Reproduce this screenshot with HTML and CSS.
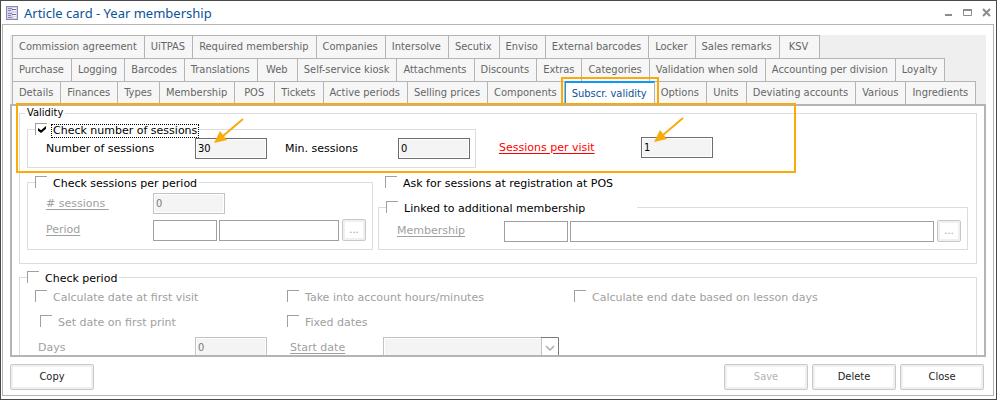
FILE: index.html
```html
<!DOCTYPE html>
<html lang="en">
<head>
  <meta charset="UTF-8">
  <meta name="viewport" content="width=device-width, initial-scale=1.0">
  <title>Article card - Year membership</title>
  <link rel="stylesheet" href="styles.css">
</head>
<body>

<div class="window">
  <header class="titlebar">
    <svg class="app-icon" width="12" height="14" viewBox="0 0 12 14" shape-rendering="crispEdges">
      <rect x="0.5" y="0.5" width="11" height="13" fill="#d4d4ec" stroke="#8c87b0"/>
      <path d="M2 2.5h4M2 4.5h3M2 7.5h4M2 9.5h3M2 11.5h4" stroke="#8c87b0"/>
      <path d="M7 2.5h3M7 4.5h3M7 7.5h3M7 9.5h3M8 11.5h2" stroke="#fff"/>
      <path d="M6 3.5h4M6 8.5h4" stroke="#6d6899"/>
    </svg>
    <h1 class="title">Article card - Year membership</h1>
    <div class="window-buttons">
      <button class="win-btn" aria-label="Minimize"><svg width="9" height="9" viewBox="0 0 9 9"><path d="M1 7h7" stroke="#8c8c8c" stroke-width="2"/></svg></button>
      <button class="win-btn" aria-label="Maximize"><svg width="9" height="9" viewBox="0 0 9 9"><path d="M.5 1v6.500h8v-6.500" fill="none" stroke="#8c8c8c"/><path d="M0 2h9" stroke="#8c8c8c" stroke-width="2"/></svg></button>
      <button class="win-btn" aria-label="Close window"><svg width="9" height="9" viewBox="0 0 9 9"><path d="M1 1l7 7M8 1l-7 7" stroke="#8c8c8c" stroke-width="2"/></svg></button>
    </div>
  </header>

  <main class="frame">
    <div class="tabs" role="tablist">
      <div class="tab-row">
        <button class="tab" role="tab">Commission agreement</button>
        <button class="tab" role="tab">UiTPAS</button>
        <button class="tab" role="tab">Required membership</button>
        <button class="tab" role="tab">Companies</button>
        <button class="tab" role="tab">Intersolve</button>
        <button class="tab" role="tab">Secutix</button>
        <button class="tab" role="tab">Enviso</button>
        <button class="tab" role="tab">External barcodes</button>
        <button class="tab" role="tab">Locker</button>
        <button class="tab" role="tab">Sales remarks</button>
        <button class="tab" role="tab">KSV</button>
      </div>
      <div class="tab-row">
        <button class="tab" role="tab">Purchase</button>
        <button class="tab" role="tab">Logging</button>
        <button class="tab" role="tab">Barcodes</button>
        <button class="tab" role="tab">Translations</button>
        <button class="tab" role="tab">Web</button>
        <button class="tab" role="tab">Self-service kiosk</button>
        <button class="tab" role="tab">Attachments</button>
        <button class="tab" role="tab">Discounts</button>
        <button class="tab" role="tab">Extras</button>
        <button class="tab" role="tab">Categories</button>
        <button class="tab" role="tab">Validation when sold</button>
        <button class="tab" role="tab">Accounting per division</button>
        <button class="tab" role="tab">Loyalty</button>
      </div>
      <div class="tab-row">
        <button class="tab" role="tab">Details</button>
        <button class="tab" role="tab">Finances</button>
        <button class="tab" role="tab">Types</button>
        <button class="tab" role="tab">Membership</button>
        <button class="tab" role="tab">POS</button>
        <button class="tab" role="tab">Tickets</button>
        <button class="tab" role="tab">Active periods</button>
        <button class="tab" role="tab">Selling prices</button>
        <button class="tab" role="tab">Components</button>
        <button class="tab active" role="tab" aria-selected="true">Subscr. validity</button>
        <button class="tab" role="tab">Options</button>
        <button class="tab" role="tab">Units</button>
        <button class="tab" role="tab">Deviating accounts</button>
        <button class="tab" role="tab">Various</button>
        <button class="tab" role="tab">Ingredients</button>
      </div>
    </div>

    <div class="panel">
      <div class="panel-content">
        <fieldset class="group validity">
          <legend class="legend-text">Validity</legend>

          <div class="row top-row">
            <fieldset class="group sub session-group">
              <legend class="check-legend">
                <input type="checkbox" class="check" id="checkSessions" checked>
                <label class="focused" for="checkSessions">Check number of sessions</label>
              </legend>
              <div class="row">
                <label class="label-wide" for="numSessions">Number of sessions</label>
                <div class="field">
                  <input type="text" class="input active-input" id="numSessions" value="30">
                  <svg class="arrow" width="30" height="26" viewBox="0 0 30 26"><path d="M29 1L9 18" stroke="#f9ab0a" stroke-width="2"/><path d="M0 25L6 13L13 22Z" fill="#f9ab0a"/></svg>
                </div>
                <label class="label-min" for="minSessions">Min. sessions</label>
                <input type="text" class="input active-input" id="minSessions" value="0">
              </div>
            </fieldset>
            <div class="row visit">
              <a href="#" class="link required" id="visitLabel">Sessions per visit</a>
              <div class="field">
                <input type="text" class="input active-input" aria-labelledby="visitLabel" value="1">
                <svg class="arrow visit-arrow" width="30" height="26" viewBox="0 0 30 26"><path d="M29 1L9 18" stroke="#f9ab0a" stroke-width="2"/><path d="M0 25L6 13L13 22Z" fill="#f9ab0a"/></svg>
              </div>
            </div>
          </div>

          <div class="row bottom-row">
            <fieldset class="group sub period-group">
              <legend class="check-legend">
                <input type="checkbox" class="check" id="checkPerPeriod">
                <label for="checkPerPeriod">Check sessions per period</label>
              </legend>
              <div class="row">
                <a href="#" class="link label-narrow" id="sessionsLabel"># sessions&nbsp;</a>
                <input type="text" class="input" aria-labelledby="sessionsLabel" value="0" disabled>
              </div>
              <div class="row lookup">
                <a href="#" class="link label-narrow" id="periodLabel">Period</a>
                <input type="text" class="input code" aria-labelledby="periodLabel">
                <input type="text" class="input name" aria-labelledby="periodLabel">
                <button class="btn more" aria-label="Select period">...</button>
              </div>
            </fieldset>

            <div class="linked">
              <div class="check-row ask">
                <input type="checkbox" class="check" id="askSessions">
                <label for="askSessions">Ask for sessions at registration at POS</label>
              </div>
              <fieldset class="group sub member-group">
                <legend class="check-legend wide">
                  <input type="checkbox" class="check" id="linkedMembership">
                  <label for="linkedMembership">Linked to additional membership</label>
                </legend>
                <div class="row lookup">
                  <a href="#" class="link label-narrow" id="memberLabel">Membership</a>
                  <input type="text" class="input code" aria-labelledby="memberLabel">
                  <input type="text" class="input name" aria-labelledby="memberLabel">
                  <button class="btn more" aria-label="Select membership">...</button>
                </div>
              </fieldset>
            </div>
          </div>
        </fieldset>

        <fieldset class="group check-period">
          <legend class="check-legend">
            <input type="checkbox" class="check" id="checkPeriod">
            <label for="checkPeriod">Check period</label>
          </legend>
          <div class="options">
            <div class="check-row">
              <input type="checkbox" class="check" id="firstVisit" disabled>
              <label for="firstVisit">Calculate date at first visit</label>
            </div>
            <div class="check-row">
              <input type="checkbox" class="check" id="hoursMinutes" disabled>
              <label for="hoursMinutes">Take into account hours/minutes</label>
            </div>
            <div class="check-row">
              <input type="checkbox" class="check" id="lessonDays" disabled>
              <label for="lessonDays">Calculate end date based on lesson days</label>
            </div>
            <div class="check-row indent">
              <input type="checkbox" class="check" id="firstPrint" disabled>
              <label for="firstPrint">Set date on first print</label>
            </div>
            <div class="check-row">
              <input type="checkbox" class="check" id="fixedDates" disabled>
              <label for="fixedDates">Fixed dates</label>
            </div>
          </div>
          <div class="row dates">
            <label class="days" for="days">Days</label>
            <input type="text" class="input" id="days" value="0" disabled>
            <a href="#" class="link start" id="startLabel">Start date</a>
            <div class="select-box">
              <select class="select" aria-labelledby="startLabel" disabled><option></option></select>
              <svg class="chevron" width="18" height="21" viewBox="0 0 18 21"><path d="M.5 0V21" stroke="#c3c3c3"/><path d="M0 .5H17.500V21" fill="none" stroke="#7a7a7a"/><path d="M5 9l4 4l4-4" fill="none" stroke="#aaa" stroke-width="1.500"/></svg>
            </div>
          </div>
        </fieldset>
      </div>
      <div class="highlight"></div>
    </div>

    <div class="actions">
      <button class="btn action">Copy</button>
      <div class="spacer"></div>
      <button class="btn action" disabled>Save</button>
      <button class="btn action">Delete</button>
      <button class="btn action">Close</button>
    </div>
  </main>
</div>

</body>
</html>
```
FILE: styles.css
```css
* {
  box-sizing: border-box;
}

body {
  margin: 0;
  background-color: #fff;
  color: #000;
  font-family: "DejaVu Sans", Verdana, sans-serif;
  font-size: 11px;
  line-height: 14px;
}

button, input, select {
  font: inherit;
  margin: 0;
}

.window {
  display: flex;
  flex-direction: column;
  height: 100vh;
  border: 1px solid #4a4a4a;
  padding: 0 2px 3px 1px;
}

/* Title bar */
.titlebar {
  display: flex;
  align-items: center;
  height: 23px;
  padding: 0 3px 0 4px;
}

.title {
  flex: 1;
  margin: 0 0 0 6px;
  color: #0a5299;
  font-family: "Noto Sans", Tahoma, sans-serif;
  font-size: 13px;
  font-weight: normal;
  line-height: 20px;
}

.window-buttons {
  display: flex;
  gap: 10px;
}

.win-btn {
  display: flex;
  border: none;
  padding: 0;
  background: none;
}

.frame {
  flex: 1;
  display: flex;
  flex-direction: column;
  min-height: 0;
  border: 1px solid #b4b4b4;
  padding: 10px 7px 5px;
}

/* Tabs */
.tabs {
  padding-left: 2px;
  background-color: #efefef;
}

.tab-row {
  display: flex;
}

.tab {
  position: relative;
  min-width: 40px;
  height: 23px;
  border: 1px solid #b4b4b4;
  border-width: 1px 1px 0 0;
  padding: 0 7px 0 6px;
  background-color: #f6f6f6;
  color: #666;
  font-family: "DejaVu Sans Condensed", Tahoma, sans-serif;
  white-space: nowrap;
}

.tab:first-child {
  border-left-width: 1px;
}

.tab.active {
  border-left: 1px solid #0a9bf5;
  border-top: 2px solid #0a9bf5;
  background-color: #fff;
  color: #0a5299;
}

/* orange frame round the selected tab */
.tab.active::after {
  content: "";
  position: absolute;
  z-index: 1;
  inset: -6px -5px -1px;
  border: 2px solid #f9ab0a;
  border-bottom: none;
}

.panel {
  position: relative;
  flex: 1;
  min-height: 0;
  border: 2px solid #b4b4b4;
}

/* the form is longer than the panel */
.panel-content {
  height: 100%;
  overflow: hidden;
  padding: 0 7px;
}

/* Groups */
.group {
  min-width: 0;
  margin: 0;
  border: 1px solid #dcdcdc;
  padding: 0;
}

.validity {
  padding: 2px 8px 13px 7px;
}

.legend-text {
  margin-left: -2px;
  padding: 0 2px;
  font-family: "DejaVu Sans Condensed", Tahoma, sans-serif;
}

.highlight {
  position: absolute;
  z-index: 1;
  top: -3px;
  left: 4px;
  width: 780px;
  height: 70px;
  border: 2px solid #f9ab0a;
  pointer-events: none;
}

.check-legend,
.check-row {
  display: flex;
  align-items: center;
  gap: 4px;
  height: 14px;
  padding: 0;
}

.sub .check-legend {
  margin-left: -11px;
}

.check-period .check-legend {
  margin-left: 7px;
  color: #000;
}

.check-legend.wide {
  padding-right: 50px;
}

.check {
  appearance: none;
  position: relative;
  width: 12px;
  height: 12px;
  border: 1px solid #a0a0a0;
  border-width: 1px 0 0 1px;
  background-color: #fff;
}

.check:checked::before {
  content: "";
  position: absolute;
  top: 2px;
  left: 2px;
  width: 8px;
  height: 7px;
  background-color: #000;
  clip-path: polygon(0 28%, 38% 60%, 100% 0, 100% 40%, 38% 100%, 0 68%);
}

.check-legend label,
.check-row label {
  margin-top: 3px;
  padding: 0 2px;
}

.focused {
  outline: 1px dotted #000;
  outline-offset: -1px;
}

.row {
  display: flex;
  align-items: center;
}

.top-row,
.bottom-row {
  align-items: flex-start;
}

.bottom-row {
  gap: 5px;
  margin-top: 7px;
}

.session-group {
  padding: 2px 5px 8px 18px;
}

.label-wide {
  width: 149px;
}

.label-min {
  width: 131px;
  padding-left: 18px;
}

.visit {
  margin: 15px 0 0 23px;
}

.period-group {
  width: 346px;
  padding: 4px 6px 8px 18px;
}

.period-group .lookup {
  margin-top: 5px;
}

.linked {
  flex: 1;
}

.ask {
  padding-left: 7px;
}

.member-group {
  margin-top: 11px;
  padding: 6px 6px 7px 18px;
}

/* Fields */
.link {
  color: #a0a0a0;
  text-decoration: underline;
  text-underline-offset: 2px;
}

.link.required {
  width: 142px;
  color: #f00;
}

.label-narrow {
  width: 107px;
}

.field {
  position: relative;
}

.input {
  display: block;
  width: 72px;
  height: 21px;
  border: 1px solid #a0a0a0;
  padding: 0 2px;
  background-color: #fff;
  font-family: "DejaVu Sans Condensed", Tahoma, sans-serif;
}

.active-input,
.input:disabled {
  border-color: #6e6e6e;
  background-color: #f4f4f4;
  box-shadow: inset 0 0 0 1px #fff;
}

.input:disabled {
  border-color: #c3c3c3;
  color: #7a7a7a;
}

.code {
  width: 64px;
  margin-right: 2px;
}

.name {
  flex: 1;
  min-width: 0;
  margin-right: 3px;
}

.arrow {
  position: absolute;
  z-index: 2;
  top: -20px;
  left: 19px;
}

.visit-arrow {
  left: 13px;
}

/* Check period */
.check-period {
  margin-top: 6px;
  padding-bottom: 20px;
  color: #a0a0a0;
}

.options {
  display: grid;
  grid-template-columns: 252px 287px 1fr;
  row-gap: 11px;
  padding: 5px 0 0 15px;
}

.indent {
  padding-left: 5px;
}

.dates {
  margin-top: 9px;
  padding-left: 18px;
}

.days {
  width: 157px;
}

.start {
  width: 116px;
  padding-left: 23px;
}

.select-box {
  position: relative;
  width: 176px;
}

.select {
  appearance: none;
  display: block;
  width: 100%;
  height: 21px;
  border: 1px solid #c3c3c3;
  border-radius: 0;
  background-color: #f4f4f4;
  box-shadow: inset 0 0 0 1px #fff;
  opacity: 1;
}

.chevron {
  position: absolute;
  top: 0;
  right: 0;
  background-color: #fff;
}

/* Buttons */
.btn {
  border: 1px solid #c8c8c8;
  border-radius: 2px;
  padding: 0;
  background-color: #fff;
  box-shadow: inset 0 0 0 2px #f0f0f0, inset 0 -2px 0 #e0e0e0;
  color: #222;
  font-family: "DejaVu Sans Condensed", Tahoma, sans-serif;
}

.more {
  width: 24px;
  height: 22px;
  color: #9a9ab4;
}

.actions {
  display: flex;
  gap: 4px;
  margin-top: 7px;
  padding-right: 2px;
}

.spacer {
  flex: 1;
}

.action {
  width: 84px;
  height: 26px;
}

.action:disabled {
  color: #b4b4b4;
}
```
